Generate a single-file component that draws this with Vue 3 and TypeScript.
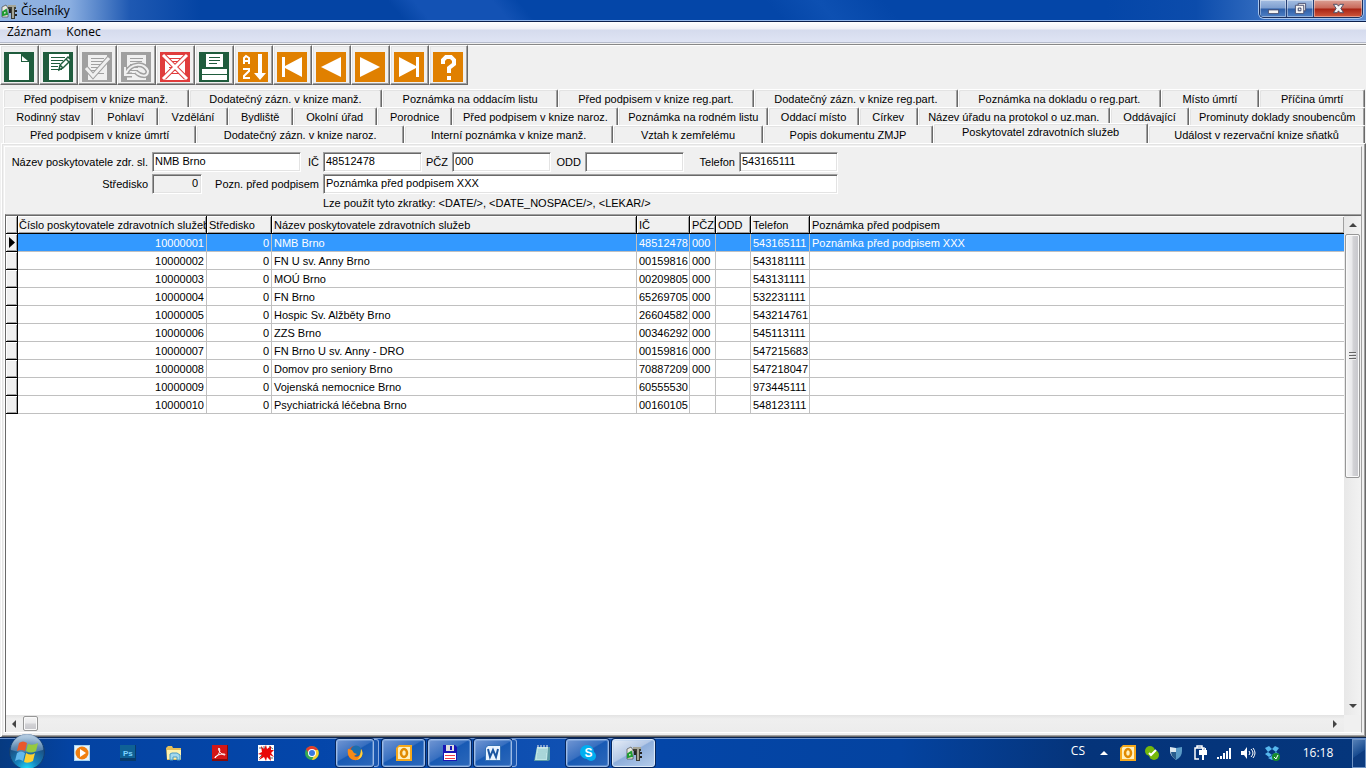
<script setup lang="ts">
import { ref } from 'vue'

interface Tab { label: string; size: number; active?: boolean }
interface Tool { label: string; color: string; art: string }
interface Provider { id: string; name: string; ic: string; pcz: string; phone: string; note?: string }
interface Task { label: string; kind: string; art: string }

const form = ref({ name: 'NMB Brno', ic: '48512478', pcz: '000', odd: '', phone: '543165111', centre: '0', note: 'Poznámka před podpisem XXX' })

const tabRows: Tab[][] = [
  [
    { label: 'Před podpisem v knize manž.', size: 186 },
    { label: 'Dodatečný zázn. v knize manž.', size: 194 },
    { label: 'Poznámka na oddacím listu', size: 176 },
    { label: 'Před podpisem v knize reg.part.', size: 196 },
    { label: 'Dodatečný zázn. v knize reg.part.', size: 205 },
    { label: 'Poznámka na dokladu o reg.part.', size: 203 },
    { label: 'Místo úmrtí', size: 98 },
    { label: 'Příčina úmrtí', size: 105 },
  ],
  [
    { label: 'Rodinný stav', size: 90 },
    { label: 'Pohlaví', size: 64 },
    { label: 'Vzdělání', size: 69 },
    { label: 'Bydliště', size: 64 },
    { label: 'Okolní úřad', size: 84 },
    { label: 'Porodnice', size: 75 },
    { label: 'Před podpisem v knize naroz.', size: 167 },
    { label: 'Poznámka na rodném listu', size: 151 },
    { label: 'Oddací místo', size: 90 },
    { label: 'Církev', size: 58 },
    { label: 'Název úřadu na protokol o uz.man.', size: 194 },
    { label: 'Oddávající', size: 79 },
    { label: 'Prominuty doklady snoubencům', size: 177 },
  ],
  [
    { label: 'Před podpisem v knize úmrtí', size: 193 },
    { label: 'Dodatečný zázn. v knize naroz.', size: 208 },
    { label: 'Interní poznámka v knize manž.', size: 209 },
    { label: 'Vztah k zemřelému', size: 149 },
    { label: 'Popis dokumentu ZMJP', size: 170 },
    { label: 'Poskytovatel zdravotních služeb', size: 215, active: true },
    { label: 'Událost v rezervační knize sňatků', size: 217 },
  ],
]

const lines = (c: string) => `<path d="M9 6.500h13M9 9.500h12M9 12.500h10M9 15.500h8M9 18.500h8M9 21.500h13" stroke="${c}" fill="none"/>`
const tools: Tool[] = [
  { label: 'Nový', color: '#1f5c3d', art: '<path fill="#fff" d="M5 2h12v8h8v18H5z"/><path fill="#fff" d="M18 4l6 5h-6z"/>' },
  { label: 'Upravit', color: '#1f5c3d', art: `<path fill="#fff" d="M6 2h20v26H6z"/><path d="M8 5.500h14M8 8.500h12M8 11.500h9M8 14.500h7M8 17.500h11" stroke="#1f5c3d"/><path fill="#fff" stroke="#1f5c3d" stroke-width="1.500" d="M16 18l1-5 8-8 3 3-8 8zM17 13l3 3M23 7l3 3"/>` },
  { label: 'Potvrdit', color: '#a0a0a0', art: '<path fill="#f0f0f0" d="M6 3h19v25H6z"/>' + lines('#a0a0a0') + '<path fill="none" stroke="#a0a0a0" stroke-width="5" d="M4 16l7 8L27 6"/><path fill="none" stroke="#f0f0f0" stroke-width="3" d="M4 16l7 8L27 6"/>' },
  { label: 'Zpět', color: '#a0a0a0', art: '<path fill="#f0f0f0" d="M6 3h19v25H6z"/>' + lines('#a0a0a0') + '<path fill="none" stroke="#a0a0a0" stroke-width="5" d="M5 21c5-10 18-11 22-2 0 7-8 5-12 1m-11-5v8h7"/><path fill="none" stroke="#f0f0f0" stroke-width="2" d="M5 21c5-10 18-11 22-2 0 7-8 5-12 1m-11-5v8h7"/>' },
  { label: 'Smazat', color: '#e03c3c', art: '<path fill="#fff" d="M5 3h20v25H5z"/>' + lines('#e03c3c') + '<path stroke="#e03c3c" stroke-width="5" d="M4 4l22 22M26 4L4 26"/><path stroke="#fff" stroke-width="3" d="M3 3l24 24M27 3L3 27"/>' },
  { label: 'Tisk', color: '#1f5c3d', art: '<path fill="#fff" d="M7 2h17v13H7zM3 17h25v11H3z"/><path d="M10 5.500h11M10 8.500h11M10 11.500h8M3 22.500h25" stroke="#1f5c3d"/>' },
  { label: 'Seřadit', color: '#e08000', art: '<path fill="none" stroke="#fff" stroke-width="2" d="M6 12V6l2-2 3 2v6M6 9h5M5 17h6v2l-5 5v2h6"/><path fill="#fff" d="M20 2h4v19h4l-6 7-6-7h4z"/>' },
  { label: 'První', color: '#e08000', art: '<path fill="#fff" d="M5 5h3v9l17-9v20L8 16v9H5z"/>' },
  { label: 'Předchozí', color: '#e08000', art: '<path fill="#fff" d="M5 15L25 5v20z"/>' },
  { label: 'Další', color: '#e08000', art: '<path fill="#fff" d="M25 15L5 5v20z"/>' },
  { label: 'Poslední', color: '#e08000', art: '<path fill="#fff" d="M25 5h-3v9L5 5v20l17-9v9h3z"/>' },
  { label: 'Nápověda', color: '#e08000', art: '<path fill="none" stroke="#fff" stroke-width="4" d="M10 12V8l3-3h5l3 3v4l-5 4v5"/><path fill="#fff" d="M14 24h4v4h-4z"/>' },
]

const providers: Provider[] = [
  { id: '10000001', name: 'NMB Brno', ic: '48512478', pcz: '000', phone: '543165111', note: 'Poznámka před podpisem XXX' },
  { id: '10000002', name: 'FN U sv. Anny Brno', ic: '00159816', pcz: '000', phone: '543181111' },
  { id: '10000003', name: 'MOÚ Brno', ic: '00209805', pcz: '000', phone: '543131111' },
  { id: '10000004', name: 'FN Brno', ic: '65269705', pcz: '000', phone: '532231111' },
  { id: '10000005', name: 'Hospic Sv. Alžběty Brno', ic: '26604582', pcz: '000', phone: '543214761' },
  { id: '10000006', name: 'ZZS Brno', ic: '00346292', pcz: '000', phone: '545113111' },
  { id: '10000007', name: 'FN Brno U sv. Anny - DRO', ic: '00159816', pcz: '000', phone: '547215683' },
  { id: '10000008', name: 'Domov pro seniory Brno', ic: '70887209', pcz: '000', phone: '547218047' },
  { id: '10000009', name: 'Vojenská nemocnice Brno', ic: '60555530', pcz: '', phone: '973445111' },
  { id: '10000010', name: 'Psychiatrická léčebna Brno', ic: '00160105', pcz: '', phone: '548123111' },
]

const appArt = '<path fill="#e8e8e0" stroke="#333" stroke-width=".6" d="M1 4l4-2 2 3v9H1z"/><path fill="none" stroke="#1e9a30" stroke-width="2" d="M2 9l3-2 1 4-4 1z"/><path fill="none" stroke="#3c3c34" stroke-width="4" d="M7 4h8M12 4v12"/><path fill="none" stroke="#c8c8b8" stroke-width="1.500" d="M7 3h8M12 4v11"/><path d="M9 6v4M14 8h2M14 12h2" stroke="#222" stroke-width="2"/>'
const outlookArt = '<path fill="#f6a91c" d="M3 0h13v16H0V3z"/><path fill="#fff0bd" d="M3 2h11v12H2V3z"/><ellipse cx="8" cy="8" rx="3" ry="4" fill="none" stroke="#e18a00" stroke-width="2.500"/>'

const tasks: Task[] = [
  { label: 'Windows Media Player', kind: '', art: '<path fill="#a8d4f2" d="M0 0h16v16H0z"/><path fill="#e5f3fc" d="M1 1h14v14H1z"/><circle cx="8" cy="8" r="6.500" fill="#f08010"/><path fill="#fff" d="M6 4l6 4-6 4z"/>' },
  { label: 'Photoshop', kind: '', art: '<path fill="#083b6c" d="M0 0h16v16H0z"/><path fill="#0f6195" d="M0 0h15v13H0z"/><text x="3" y="11" font-size="8" font-weight="700" fill="#7cd2ff" font-family="Liberation Sans">Ps</text>' },
  { label: 'Průzkumník', kind: '', art: '<path fill="#e5bf59" d="M0 3l2-2h4l1 2h8v12H1z"/><path fill="#fff2ae" d="M1 5h14v9H1z"/><path fill="#a4d9ee" stroke="#4b9bc4" d="M4 15V9l2-1h5l3 2v5h-3v-3H7v3z"/>' },
  { label: 'Acrobat', kind: '', art: '<path fill="#860b0b" d="M0 0h16v16H0z"/><path fill="#d31717" d="M0 0h15v14H0z"/><path fill="none" stroke="#fff" d="M3 13C7 10 9 5 7 3c-2 1 2 7 6 7 1-2-7-1-10 2z"/>' },
  { label: 'Nástroj', kind: '', art: '<path fill="#fff" d="M0 0h16v16H0z"/><path fill="#e90808" d="M3 1l3 3 2-4 1 4 4-3v4h3l-3 3 3 4-4-2 1 6-4-4-1 4-2-4-5 3 3-5-4-1 4-2z"/><path stroke="#333" stroke-width=".7" fill="none" d="M1 3h3M11 1l4 3M1 13l3-3M12 13h3M6 1v3"/>' },
  { label: 'Chrome', kind: '', art: '<circle cx="8" cy="8" r="7" fill="#35a853"/><path fill="#e33b2e" d="M2 4a7 7 0 0 1 12 1H8L5 9z"/><path fill="#f8cf30" d="M14 5a7 7 0 0 1-6 10l3-7-3-3z"/><circle cx="8" cy="8" r="4" fill="#fff"/><circle cx="8" cy="8" r="3" fill="#3a78df"/>' },
  { label: 'Firefox', kind: 'open stacked', art: '<circle cx="8" cy="8" r="7" fill="#e95214"/><circle cx="9" cy="6" r="5.500" fill="#1c6dae"/><path fill="#f88a18" d="M1 4l4 1 2 3 3 1-3 2c3 3 7 0 7-7 4 7-2 12-7 11C2 14 0 9 1 4z"/><path fill="#ffd53c" d="M14 4c4 6-1 10-4 11 3-3 4-6 4-11z"/>' },
  { label: 'Outlook', kind: 'open', art: outlookArt },
  { label: 'Total Commander', kind: 'open', art: '<path fill="#1916b4" d="M1 0h12l2 2v14H1z"/><path fill="#ddd" d="M4 0h8v6H4z"/><path fill="#1916b4" d="M8 1h2v4H8z"/><path fill="#fff" d="M2 8h12v7H2z"/><path stroke="#f03b45" d="M3 10.500h10M3 13.500h10"/>' },
  { label: 'Word', kind: 'open stacked', art: '<path fill="#3973b5" d="M3 0h13v16H0V3z"/><path fill="#eaf4ff" d="M3 1h12v14H1V3z"/><path fill="none" stroke="#1b55a1" stroke-width="2" d="M3 4l2 8 3-7 3 7 2-8"/>' },
  { label: 'Poznámkový blok', kind: 'warm', art: '<path fill="#5b9ba6" d="M3 2h13v13l-2 1H0z"/><path fill="#bde4e6" d="M3 2h11l-1 13H1z"/><path d="M4 5h9M4 7h9M3 9h9M3 11h9M3 13h9" stroke="#83bbc1" stroke-width=".7"/><path d="M4 0v3M7 0v3M10 0v3M13 0v3" stroke="#eee"/>' },
  { label: 'Skype', kind: 'open', art: '<circle cx="7" cy="7" r="7" fill="#00aff0"/><circle cx="11" cy="11" r="5" fill="#00aff0"/><text x="4.500" y="12" font-size="12" font-weight="700" fill="#fff" font-family="Liberation Sans">S</text>' },
  { label: 'Číselníky', kind: 'open current', art: appArt },
]

const tray: { label: string; art: string }[] = [
  { label: 'Outlook', art: outlookArt },
  { label: 'Skype online', art: '<circle cx="6" cy="6" r="5" fill="#75b80b"/><circle cx="10" cy="10" r="5" fill="#75b80b"/><path fill="none" stroke="#fff" stroke-width="2" d="M5 8l2 2 5-5"/>' },
  { label: 'Zabezpečení', art: '<path fill="#dce8ef" d="M2 2l6 1v12c-4-3-6-6-6-9z"/><path fill="#5a9bc7" d="M8 3l6-1v4c0 4-2 7-6 9z"/><path fill="#285c8c" d="M3 7h5v8c-3-2-5-5-5-8z"/>' },
  { label: 'Napájení', art: '<path fill="none" stroke="#fff" stroke-width="1.500" d="M7 14H3V3h9v3M5 3V1h5v2"/><path fill="#fff" d="M8 5h2V3h1v2h2V3h1v2h1v5h-3v5h-2v-5H7V5z"/>' },
  { label: 'Síť', art: '<path fill="#fff" d="M1 12h2v2H1zM4 11h2v3H4zM7 8h2v6H7zM10 6h2v8h-2zM13 3h2v11h-2z"/>' },
  { label: 'Hlasitost', art: '<path fill="#fff" d="M1 6h3l3-4v12l-3-4H1z"/><path fill="none" stroke="#fff" d="M9 6q2 2 0 4M11 4q4 4 0 8M13 3q4 5 0 10"/>' },
  { label: 'Dropbox', art: '<path fill="#57b8ee" d="M1 3l4-2 3 3-4 3zM8 4l3-3 4 2-3 4zM1 9l3-2 4 3-3 2zM8 10l4-3 3 2-4 3zM4 13l4-2 4 2-4 2z"/><circle cx="12" cy="12" r="4" fill="#188b2c"/><path fill="none" stroke="#fff" d="M10 12l2 2 2-4"/>' },
]
</script>

<template>
  <div class="desktop">
    <header class="titlebar">
      <svg class="app-icon" viewBox="0 0 16 16" v-html="appArt"></svg>
      <h1>Číselníky</h1>
      <div class="controls">
        <button class="ctl" aria-label="Minimalizovat"><svg viewBox="0 0 14 14"><path fill="#f4f4f4" stroke="#4a5070" d="M1.500 8.500h11v4h-11z" /></svg></button>
        <button class="ctl" aria-label="Obnovit"><svg viewBox="0 0 14 14"><path fill="#f4f4f4" stroke="#4a5070" fill-rule="evenodd" d="M4.500 1.500h8v8h-8zM7 4h3v3H7z" /><path fill="#f4f4f4" stroke="#4a5070" fill-rule="evenodd" d="M1.500 3.500h9v9h-9zM4.500 6.500h3v3h-3z" /></svg></button>
        <button class="ctl close" aria-label="Zavřít"><svg viewBox="0 0 14 14"><path fill="#f4f4f4" stroke="#4a4a60" d="M1.500 2.500h4L7 4.500l1.500-2h4L9.500 7l3 4.500h-4L7 9.500l-1.500 2h-4l3-4.500z" /></svg></button>
      </div>
    </header>
    <nav class="menu"><button>Záznam</button><button>Konec</button></nav>
    <div class="toolbar">
      <button v-for="t in tools" :key="t.label" class="tool" :aria-label="t.label">
        <svg viewBox="0 0 30 30"><rect width="30" height="30" :fill="t.color" /><g v-html="t.art"></g></svg>
      </button>
    </div>
    <main class="notebook">
      <div class="tabs" role="tablist">
        <div v-for="(row, i) in tabRows" :key="i" class="tab-row">
          <button v-for="t in row" :key="t.label" role="tab" :aria-selected="!!t.active" class="tab" :class="{ active: t.active }" :style="{ flexGrow: t.size }">{{ t.label }}</button>
        </div>
      </div>
      <section class="sheet">
        <div class="inner">
          <form class="form" @submit.prevent>
            <label for="name">Název poskytovatele zdr. sl.</label><input id="name" v-model="form.name" />
            <label for="ic">IČ</label><input id="ic" v-model="form.ic" />
            <label for="pcz">PČZ</label><input id="pcz" v-model="form.pcz" />
            <label for="odd">ODD</label><input id="odd" v-model="form.odd" />
            <label for="phone">Telefon</label><input id="phone" v-model="form.phone" />
            <label for="centre">Středisko</label>
            <div class="pair"><input id="centre" v-model="form.centre" class="centre" readonly /><label for="note">Pozn. před podpisem</label></div>
            <input id="note" v-model="form.note" class="note" />
            <p class="hint">Lze použít tyto zkratky: &lt;DATE/&gt;, &lt;DATE_NOSPACE/&gt;, &lt;LEKAR/&gt;</p>
          </form>
          <div class="browser">
            <div class="view">
              <table>
                <colgroup><col class="c-mark" /><col class="c-id" /><col class="c-centre" /><col class="c-name" /><col class="c-ic" /><col class="c-pcz" /><col class="c-odd" /><col class="c-phone" /><col /></colgroup>
                <thead>
                  <tr><th></th><th>Číslo poskytovatele zdravotních služeb</th><th>Středisko</th><th>Název poskytovatele zdravotních služeb</th><th>IČ</th><th>PČZ</th><th>ODD</th><th>Telefon</th><th>Poznámka před podpisem</th></tr>
                </thead>
                <tbody>
                  <tr v-for="(p, i) in providers" :key="p.id" :class="{ selected: i === 0 }">
                    <td class="mark"><svg v-if="i === 0" viewBox="0 0 6 11"><path d="M0 0l6 5.500L0 11z" /></svg></td>
                    <td class="num">{{ p.id }}</td><td class="num">0</td><td>{{ p.name }}</td><td>{{ p.ic }}</td><td>{{ p.pcz }}</td><td></td><td>{{ p.phone }}</td><td>{{ p.note }}</td>
                  </tr>
                </tbody>
              </table>
            </div>
            <div class="vbar">
              <svg class="arrow" viewBox="0 0 8 4"><path d="M0 4l4-4 4 4z" /></svg>
              <div class="vthumb"><i></i><i></i><i></i></div>
              <svg class="arrow last" viewBox="0 0 8 4"><path d="M0 0l4 4 4-4z" /></svg>
            </div>
            <div class="hbar">
              <svg class="harrow" viewBox="0 0 4 8"><path d="M4 0L0 4l4 4z" /></svg>
              <div class="hthumb"></div>
              <svg class="harrow right" viewBox="0 0 4 8"><path d="M0 0l4 4-4 4z" /></svg>
            </div>
            <div class="corner"></div>
          </div>
        </div>
      </section>
    </main>
    <footer class="taskbar">
      <button class="start" aria-label="Start">
        <svg viewBox="0 0 38 38">
          <defs>
            <radialGradient id="orb" cx=".5" cy="1" r=".9"><stop offset="0" stop-color="#20e0ff" /><stop offset=".35" stop-color="#1583bd" /><stop offset=".8" stop-color="#1b4f83" /><stop offset="1" stop-color="#6f9cc4" /></radialGradient>
            <linearGradient id="gloss" x1="0" y1="0" x2="0" y2="1"><stop offset="0" stop-color="#d5e3f0" /><stop offset="1" stop-color="#5484b0" /></linearGradient>
          </defs>
          <circle cx="19" cy="19" r="17.500" fill="url(#orb)" stroke="#123e72" />
          <path fill="url(#gloss)" opacity=".75" d="M3 17a16 16 0 0 1 32 0q-16 5-32 0z" />
          <path fill="#e9582b" d="M11 10q4-3 8 0l-2 8q-4-2-8 0z" />
          <path fill="#96c93e" d="M20 11q5 2 10-1l-2 8q-5 3-10 0z" />
          <path fill="#63b8ed" d="M9 20q4-3 8 0l-2 8q-4-3-8 0z" />
          <path fill="#fdd031" d="M18 20q5 3 9 0l-2 8q-5 3-9 1z" />
        </svg>
      </button>
      <div v-for="t in tasks" :key="t.label" class="slot" :class="t.kind">
        <button class="task" :aria-label="t.label"><svg viewBox="0 0 16 16" v-html="t.art"></svg></button>
        <span class="stack"></span>
      </div>
      <div class="tray">
        <span class="lang">CS</span>
        <button class="tray-icon" aria-label="Skryté ikony"><svg viewBox="0 0 16 16"><path fill="#fff" d="M4 10l4-4 4 4z" /></svg></button>
        <button v-for="t in tray" :key="t.label" class="tray-icon" :aria-label="t.label"><svg viewBox="0 0 16 16" v-html="t.art"></svg></button>
        <time>16:18</time>
        <button class="show" aria-label="Zobrazit plochu"></button>
      </div>
    </footer>
  </div>
</template>

<style>
html, body { margin: 0; background: #f0f0f0; }
</style>

<style scoped>
* { box-sizing: border-box; }
.desktop { height: 100vh; display: flex; flex-direction: column; overflow: hidden; background: #f0f0f0; color: #000; font: 11px/14px "Liberation Sans", Arial, sans-serif; }
button { font: inherit; color: inherit; border: 0; padding: 0; margin: 0; background: none; }
svg { display: block; }

.titlebar { flex: none; height: 22px; display: flex; align-items: center; border-top: 0; border-bottom: 1px solid #0a1f4c; box-shadow: inset 0 -1px #8fb4e8;
  background: linear-gradient(90deg, #94b5e0 0, #8aaee0 70px, rgba(70, 120, 200, .4) 130px, transparent 200px), linear-gradient(270deg, #5c8ad0 0, #4b80cc 60px, rgba(30, 90, 180, .3) 170px, transparent 260px), linear-gradient(50deg, #0444a4 0, #0444a4 310px, #1352b4 330px, #1352b4 390px, #0446a8 410px, #0446a8 600px, #0d50b2 640px, #0446a8 690px); }
.app-icon { width: 18px; height: 16px; }
h1 { margin: 0 0 0 3px; font: 12px/20px "Open Sans", "Noto Sans", sans-serif; }
.controls { display: flex; align-self: flex-start; margin-left: auto; margin-right: 3px; height: 18px; border: 1px solid #1b2f5c; border-top: 0; border-radius: 0 0 5px 5px; overflow: hidden; box-shadow: 0 0 0 1px #a9c6ee; }
.ctl { width: 27px; display: flex; align-items: center; justify-content: center; border-right: 1px solid #263f74; box-shadow: inset 0 0 0 1px rgba(255, 255, 255, .4); background: linear-gradient(#a5bee2 0, #7e9fd0 8px, #2f5fa8 9px, #4d80c6 100%); }
.ctl svg { width: 13px; height: 13px; }
.close { width: 48px; border-right: 0; background: linear-gradient(#dba094 0, #c9695a 8px, #a82414 9px, #d0583c 100%); }

.menu { flex: none; height: 21px; display: flex; align-items: center; padding-left: 7px; gap: 15px; border-bottom: 1px solid #b6bccc; background: linear-gradient(#fff 0, #eef0f7 7px, #d5dbed 8px, #dfe4f4 100%); font: 12px/16px "Open Sans", "Noto Sans", sans-serif; }
.toolbar { flex: none; display: flex; margin-top: 1px; height: 42px; padding-bottom: 1px; border-top: 1px solid #888; box-shadow: inset 0 1px #fff; }
.tool { width: 39px; height: 40px; padding: 4px 0 0 3px; border: 1px solid; border-color: #fff #696969 #696969 #fff; box-shadow: inset -1px -1px #a0a0a0, inset 1px 1px #e3e3e3; }
.tool svg { width: 30px; height: 30px; }

.notebook { flex: 1; min-height: 0; display: flex; flex-direction: column; padding: 3px 0 0; }
.tabs { flex: none; padding: 0 1px 0 3px; }
.tab-row { display: flex; height: 18px; }
.tab { flex: 1 1 0; min-width: 0; white-space: nowrap; line-height: 14px; border-top: 1px solid #fff; border-left: 1px solid #fff; border-right: 1px solid #696969; border-radius: 2px 2px 0 0; box-shadow: inset -1px 0 #a0a0a0, inset 1px 1px #e3e3e3; }
.tab.active { margin-top: -2px; padding-bottom: 3px; background: #f0f0f0; }
.sheet { flex: 1; min-height: 0; display: flex; margin-left: 1px; padding: 2px 3px 3px 2px; border: 1px solid; border-color: #fff #696969 #696969 #fff; box-shadow: inset -1px -1px #a0a0a0, inset 1px 1px #e3e3e3; }
.inner { flex: 1; min-width: 0; display: flex; flex-direction: column; border: 1px solid; border-color: #fff #a0a0a0 #fff #fff; }

.form { flex: none; display: grid; grid-template-columns: 147px 149px 22px 99px 30px 99px 34px 99px 55px 99px; grid-template-rows: 20px 20px 14px; row-gap: 2px; padding: 5px 0 4px; align-items: center; }
.form label { justify-self: end; padding-right: 4px; white-space: nowrap; }
.form input { width: 100%; height: 20px; min-width: 0; margin: 0; padding: 0 2px 2px; border: 1px solid; border-color: #a0a0a0 #fff #fff #a0a0a0; border-radius: 0; outline: 0; background: #fff; box-shadow: inset 1px 1px #696969, inset -1px -1px #e3e3e3; font: inherit; color: #000; }
.pair { grid-column: span 2; display: flex; align-items: center; justify-content: space-between; }
.form .centre { width: 50px; padding-right: 3px; text-align: right; background: #f0f0f0; }
.form .note { grid-column: span 7; }
.hint { grid-column: 4 / -1; margin: 0; white-space: nowrap; }

.browser { flex: 1; min-height: 0; display: grid; grid-template-columns: minmax(0, 1fr) 17px; grid-template-rows: minmax(0, 1fr) 17px; border-top: 1px solid #a0a0a0; border-left: 1px solid #696969; box-shadow: inset 0 1px #696969; padding-top: 1px; background: #fff; }
.view { overflow: hidden; }
table { width: 100%; table-layout: fixed; border-spacing: 0; }
.c-mark { width: 12px; } .c-id { width: 189px; } .c-centre { width: 65px; } .c-name { width: 365px; } .c-ic { width: 53px; } .c-pcz { width: 26px; } .c-odd { width: 35px; } .c-phone { width: 59px; }
th, td { height: 18px; padding: 0 2px; overflow: hidden; white-space: nowrap; text-align: left; font-weight: 400; line-height: 14px; }
th { background: #f0f0f0; border-right: 1px solid #000; border-bottom: 1px solid #000; box-shadow: inset 1px 1px #fff, inset -1px -1px #a0a0a0; }
th:nth-child(2) { padding: 0 1px; }
td { border-right: 1px solid #c0c0c0; border-bottom: 1px solid #c0c0c0; }
th:last-child, td:last-child { border-right: 0; }
.num { text-align: right; }
.selected td { background: #3399ff; color: #fff; }
tbody td.mark { padding: 0 0 0 3px; background: #f0f0f0; border-color: #000; box-shadow: inset 1px 1px #fff, inset -1px -1px #a0a0a0; }
.mark svg { width: 6px; height: 11px; }

.vbar { display: flex; flex-direction: column; align-items: center; background: linear-gradient(90deg, #e8e8e8, #f2f2f2); }
.arrow { width: 8px; height: 4px; margin: 7px 0; fill: #444; }
.last { margin-top: auto; }
.vthumb { width: 15px; height: 244px; display: flex; flex-direction: column; align-items: center; justify-content: center; gap: 1px; border: 1px solid #979797; border-radius: 2px; box-shadow: inset 0 0 0 1px #fafafa; background: linear-gradient(90deg, #f5f5f5 0, #e9e9eb 6px, #d3d3d6 7px, #c6c6cb 100%); }
.vthumb i { width: 7px; height: 2px; background: linear-gradient(#666 50%, #eee 50%); }
.hbar { display: flex; align-items: center; background: linear-gradient(#e3e3e3, #efefef 4px, #ececec); }
.harrow { width: 4px; height: 8px; margin: 0 7px 0 6px; fill: #444; }
.right { margin-left: auto; }
.hthumb { width: 15px; height: 15px; border: 1px solid #979797; border-radius: 2px; box-shadow: inset 0 0 0 1px #fafafa; background: linear-gradient(#f5f5f5 0, #e9e9eb 6px, #d3d3d6 7px, #c6c6cb 100%); }
.corner { background: #f0f0f0; }

.taskbar { flex: none; height: 31px; display: flex; position: relative; border-top: 1px solid #0a2450; box-shadow: inset 0 1px #6b93cf; background: linear-gradient(90deg, #063a80 0, #0443a2 70px, #0446aa 320px, #0c4eb0 480px, #1352b4 640px, #0446a8 660px, #0443a0 900px, #05347a 1080px, #05367c 100%); }
.start { width: 58px; flex: none; padding-left: 8px; margin-top: -5px; }
.start svg { width: 38px; height: 38px; position: relative; }
.slot { flex: none; width: 46px; display: flex; padding: 1px 1px 1px 2px; }
.task { flex: 1; display: flex; align-items: center; justify-content: center; border: 1px solid transparent; border-radius: 3px; }
.task svg { width: 16px; height: 16px; }
.stack { display: none; }
.open .task { border-color: #9dbbe6; box-shadow: 0 0 0 1px #06265c, inset 0 0 0 1px rgba(170, 200, 240, .35); background: linear-gradient(150deg, #7196d3 0, #376fc0 45%, #185ab4 48%, #2d68ba 100%); }
.stacked .stack { display: block; width: 5px; border: 1px solid #8aabe0; border-left: 0; border-radius: 0 3px 3px 0; background: #1c58b0; }
.current .task { border-color: #dce8f6; background: linear-gradient(150deg, #e6edf7 0, #b4c8e6 45%, #8eaedb 48%, #b3cbea 100%); }
.tray { margin-left: auto; display: flex; align-items: center; color: #fff; font: 12px/16px "Open Sans", "Noto Sans", sans-serif; }
.lang { margin-right: 7px; padding-bottom: 5px; }
.tray-icon { width: 24px; display: flex; justify-content: center; }
.tray-icon svg { width: 16px; height: 16px; }
time { width: 68px; text-align: center; }
.show { align-self: stretch; width: 14px; margin-top: 1px; border: 1px solid #6f93c4; background: linear-gradient(145deg, #5580b6, #184b90 50%, #0c3b80 52%); }
</style>
